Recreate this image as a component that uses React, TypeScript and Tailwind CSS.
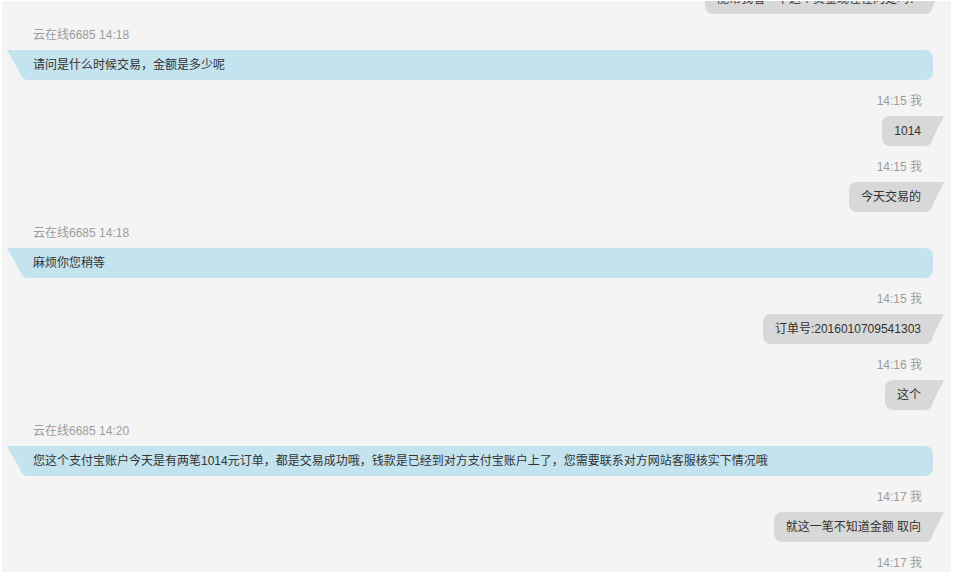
import React from 'react'

type Msg = { side: 'left' | 'right'; label?: string; text: string }

const messages: Msg[] = [
  { side: 'right', text: '能帮我看一下这个资金现在在向处吗？' },
  { side: 'left', label: '云在线6685 14:18', text: '请问是什么时候交易，金额是多少呢' },
  { side: 'right', label: '14:15 我', text: '1014' },
  { side: 'right', label: '14:15 我', text: '今天交易的' },
  { side: 'left', label: '云在线6685 14:18', text: '麻烦你您稍等' },
  { side: 'right', label: '14:15 我', text: '订单号:2016010709541303' },
  { side: 'right', label: '14:16 我', text: '这个' },
  {
    side: 'left',
    label: '云在线6685 14:20',
    text: '您这个支付宝账户今天是有两笔1014元订单，都是交易成功哦，钱款是已经到对方支付宝账户上了，您需要联系对方网站客服核实下情况哦',
  },
  { side: 'right', label: '14:17 我', text: '就这一笔不知道金额 取向' },
  { side: 'right', label: '14:17 我', text: '' },
]

function LeftTail() {
  return (
    <svg width="13" height="30" viewBox="0 0 13 30" className="shrink-0 block">
      <polygon points="0,0 13,0 13,23" fill="#c3e3ee" />
    </svg>
  )
}

function RightTail() {
  return (
    <svg width="11" height="30" viewBox="0 0 11 30" className="shrink-0 block">
      <polygon points="0,0 11,0 0,22" fill="#d8d8d8" />
    </svg>
  )
}

function Message({ msg }: { msg: Msg }) {
  if (msg.side === 'left') {
    return (
      <div className="flex flex-col">
        {msg.label && (
          <div className="pl-[31px] text-[12px] leading-[16px] text-[#9c9c9c]">{msg.label}</div>
        )}
        <div className="mt-[7px] ml-[5px] mr-[18px] flex">
          <LeftTail />
          <div className="flex-1 h-[30px] leading-[30px] pl-[13px] text-[12px] text-[#333] bg-[#c3e3ee] rounded-r-[8px] rounded-bl-[8px] whitespace-nowrap">
            {msg.text}
          </div>
        </div>
      </div>
    )
  }
  return (
    <div className="flex flex-col items-end">
      {msg.label && (
        <div className="pr-[29px] text-[12px] leading-[16px] text-[#9c9c9c]">{msg.label}</div>
      )}
      {msg.text && (
        <div className={`${msg.label ? 'mt-[7px]' : ''} mr-[7px] flex`}>
          <div className="h-[30px] leading-[30px] px-[12px] text-[12px] text-[#333] bg-[#d8d8d8] rounded-l-[8px] rounded-br-[8px] whitespace-nowrap">
            {msg.text}
          </div>
          <RightTail />
        </div>
      )}
    </div>
  )
}

export default function App() {
  return (
    <div
      className="w-full h-[574px] bg-white pl-[2px] pt-[1px] pr-[9px] pb-[2px]"
      style={{ fontFamily: '"Liberation Sans", "Noto Sans CJK SC", sans-serif' }}
    >
      <div className="h-full bg-[#f4f4f4] overflow-hidden">
        <div className="-mt-[17px] flex flex-col gap-[13px]">
          {messages.map((m, i) => (
            <Message key={i} msg={m} />
          ))}
        </div>
      </div>
    </div>
  )
}
